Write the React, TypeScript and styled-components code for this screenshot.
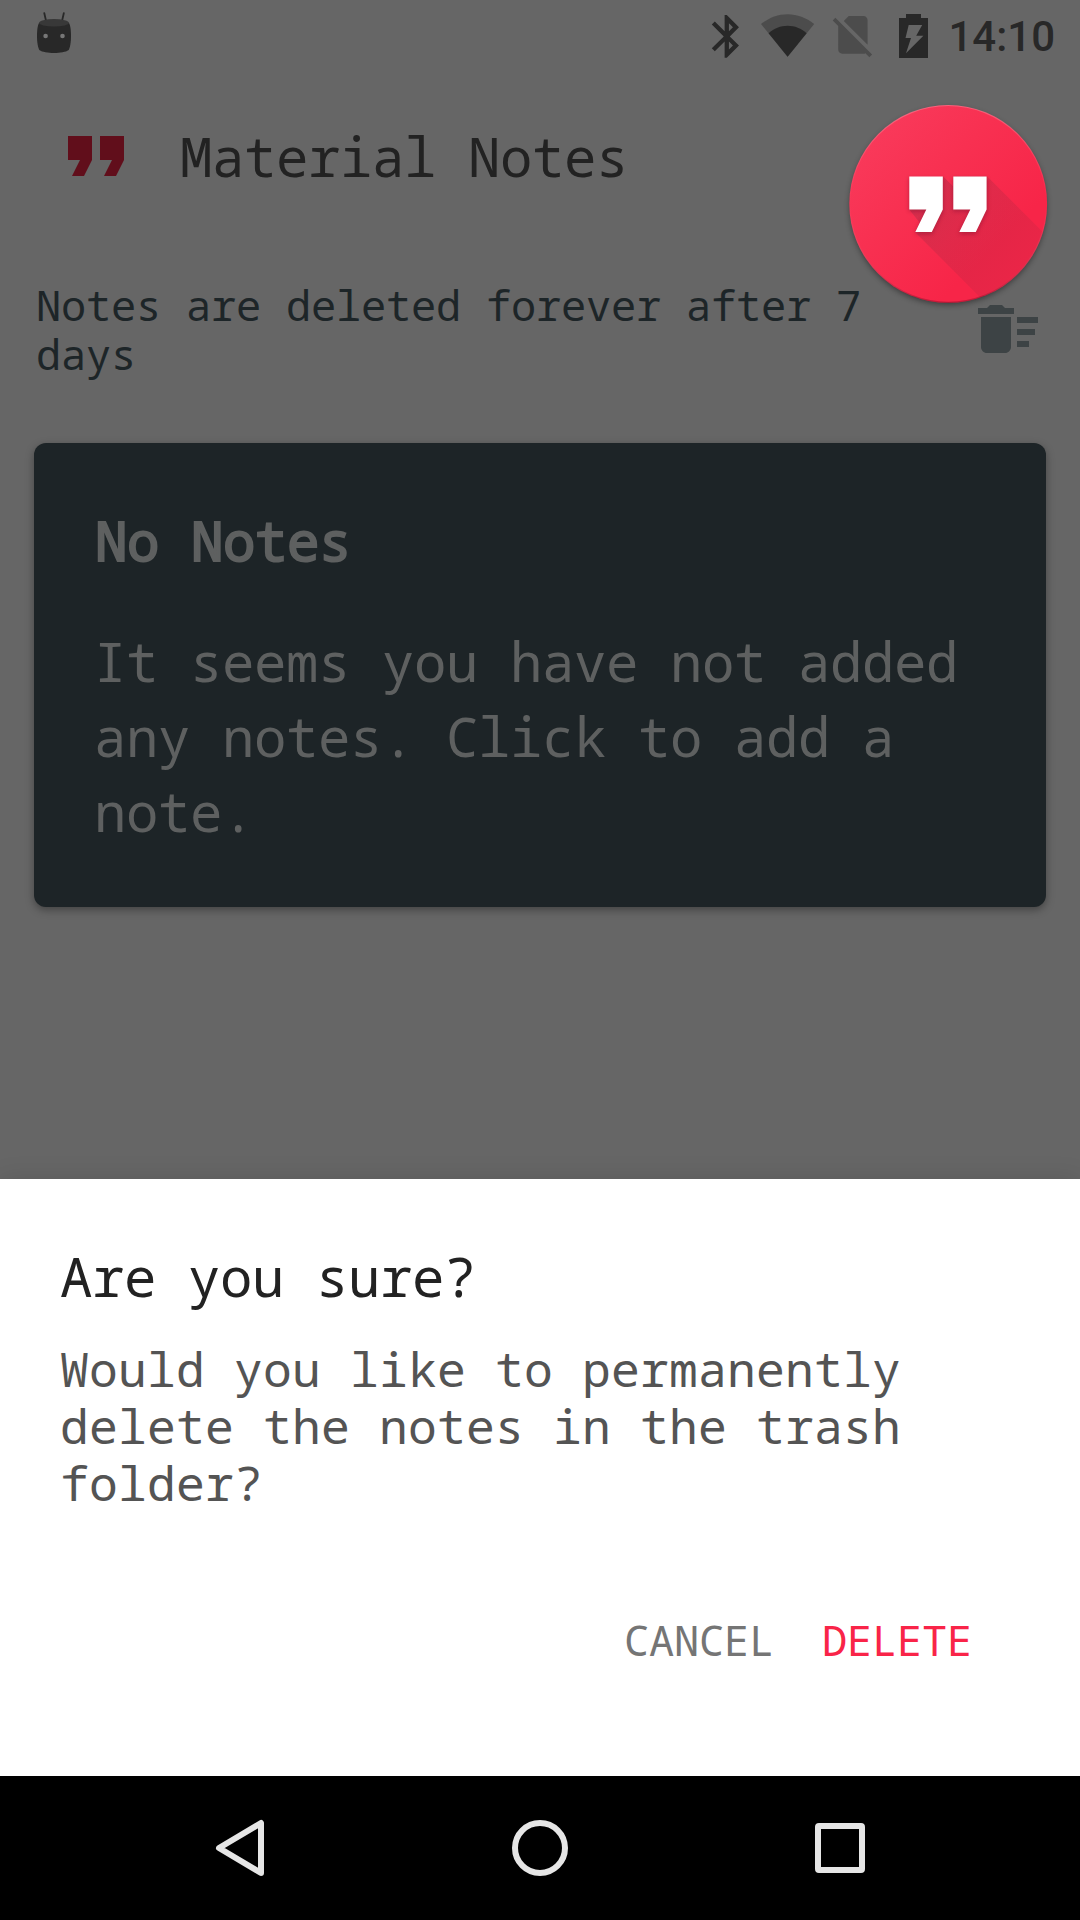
import React from "react";
import styled, { createGlobalStyle } from "styled-components";

const GlobalStyle = createGlobalStyle`
  html, body { margin: 0; padding: 0; background: #666666; }
  *, *::before, *::after { box-sizing: border-box; }
`;

const mono = `"Noto Sans Mono", "DejaVu Sans Mono", monospace`;

const Screen = styled.div`
  position: relative;
  display: flex;
  flex-direction: column;
  width: 1080px;
  height: 1920px;
  overflow: hidden;
  background: #666666;
  font-family: ${mono};
`;

const StatusBar = styled.header`
  display: flex;
  align-items: center;
  justify-content: space-between;
  height: 72px;
  padding: 0 25px 0 36px;
`;

const StatusIcons = styled.div`
  display: flex;
  align-items: center;
  height: 72px;
`;

const Clock = styled.time`
  margin-left: 18px;
  font: 500 42px/72px Roboto, sans-serif;
  color: #282828;
  padding-top: 2px;
`;

const Toolbar = styled.div`
  display: flex;
  align-items: center;
  height: 168px;
  padding-left: 60px;
  gap: 48px;
`;

const ToolbarTitle = styled.h1`
  margin: 0;
  font-size: 54px;
  font-weight: 400;
  letter-spacing: -0.4px;
  line-height: 72px;
  color: #222222;
`;

const TrashNotice = styled.section`
  display: flex;
  align-items: center;
  justify-content: space-between;
  height: 178px;
  padding: 0 36px;
`;

const NoticeText = styled.p`
  margin: 0;
  width: 860px;
  font-size: 42px;
  line-height: 49px;
  letter-spacing: -0.2px;
  color: #1d2528;
`;

const IconButton = styled.button`
  display: flex;
  padding: 0;
  border: 0;
  background: none;
`;

const Card = styled.article`
  display: flex;
  flex-direction: column;
  gap: 46px;
  height: 464px;
  margin: 25px 34px 0;
  padding: 60px 60px 58px;
  border-radius: 12px;
  background: #1d2427;
  box-shadow: 0 3px 8px rgba(0, 0, 0, 0.35);
  color: #5e6060;
  font-size: 54px;
  line-height: 75px;
  letter-spacing: -0.4px;
`;

const CardTitle = styled.h2`
  margin: 0;
  padding-left: 1px;
  font-size: inherit;
  font-weight: 400;
  -webkit-text-stroke: 2px currentColor;
`;

const CardText = styled.p`
  margin: 0;
`;

const Sheet = styled.section`
  display: flex;
  flex-direction: column;
  height: 597px;
  margin-top: auto;
  padding: 61px 60px 0;
  background: #ffffff;
  box-shadow: 0 0 24px rgba(0, 0, 0, 0.12);
`;

const SheetTitle = styled.h2`
  margin: 0 0 28px;
  font-size: 54px;
  font-weight: 400;
  line-height: 72px;
  letter-spacing: -0.4px;
  color: #222222;
`;

const SheetText = styled.p`
  margin: 0;
  font-size: 48px;
  line-height: 57px;
  letter-spacing: 0.2px;
  color: #545454;
`;

const Actions = styled.div`
  display: flex;
  justify-content: flex-end;
  gap: 48px;
  margin-top: 104px;
  padding-right: 48px;
`;

const TextButton = styled.button<{ $tone: string }>`
  padding: 0;
  border: 0;
  background: none;
  font: 400 42px/50px ${mono};
  letter-spacing: -0.2px;
  color: ${(p) => p.$tone};
`;

const NavBar = styled.nav`
  display: flex;
  flex-shrink: 0;
  justify-content: center;
  height: 144px;
  background: #000000;
`;

const NavButton = styled.button`
  display: flex;
  align-items: center;
  justify-content: center;
  width: 300px;
  padding: 0;
  border: 0;
  background: none;
`;

const FloatingLogo = styled.div`
  position: absolute;
  top: 92px;
  left: 836px;
  width: 224px;
  height: 230px;
`;

const AndroidHead = () => (
  <svg width="36" height="72" viewBox="36 0 36 72">
    <path d="M44.3 13.2l1.9 8.3M63.8 13.2l-1.9 8.3" stroke="#282828" strokeWidth="1.8" strokeLinecap="round" />
    <path d="M39 23C37.7 25 37 30 37 36s.8 11.500 2.600 14.300C42 52 48 53 54 53s12-1 14.400-2.700C70.200 47.500 71 42 71 36s-.7-11-2-13z" fill="#282828" />
    <ellipse cx="54" cy="22.800" rx="15" ry="3.700" fill="#383838" />
    <circle cx="45.600" cy="36" r="2.300" fill="#777777" />
    <circle cx="62.500" cy="36" r="2.300" fill="#777777" />
  </svg>
);

const StatusGlyphs = () => (
  <svg width="228" height="72" viewBox="702 0 228 72">
    <g fill="#282828">
      <path
        transform="translate(701.1 10.700) scale(2.140)"
        d="M17.710 7.710L12 2h-1v7.590L6.410 5 5 6.410 10.590 12 5 17.590 6.410 19 11 14.410V22h1l5.710-5.710-4.300-4.290 4.300-4.290zM13 5.830l1.880 1.880L13 9.590V5.830zm1.880 10.460L13 18.170v-3.760l1.880 1.880z"
      />
    </g>
    <path d="M787.600 56.700L761 24C769 17.700 778 14.200 787.600 14.200S806.200 17.700 814.200 24z" fill="#4c4c4c" />
    <path d="M787.600 56.700L768.600 33.200C774 28.400 780.500 25.700 787.600 25.700S801.200 28.400 806.600 33.200z" fill="#282828" />
    <path
      transform="translate(827.700 9.700) scale(2.100)"
      fill="#4c4c4c"
      d="M18.990 5c0-1.100-.89-2-1.990-2h-7L7.660 5.340 19 16.680 18.990 5zM3.650 3.880L2.380 5.150 5 7.770V19c0 1.100.9 2 2 2h10.010c.35 0 .67-.1.960-.26l1.880 1.880 1.270-1.270L3.650 3.880z"
    />
    <path d="M906 14h15v4h7v40h-29V18h7z" fill="#282828" />
    <path d="M908.700 25h13.500l-6 10.700h7.200L906 53.300 911 38h-5.500z" fill="#666666" />
  </svg>
);

const QuoteMark = () => (
  <svg width="72" height="72" viewBox="60 120 72 72">
    <path d="M68 136h24v24l-8 16H72l8-16H68zM100 136h24v24l-8 16h-12l8-16h-12z" fill="#610e1b" />
  </svg>
);

const SweepIcon = () => (
  <svg width="72" height="72" viewBox="0 0 24 24" fill="#3d4345">
    <path d="M15 16h4v2h-4zm0-8h7v2h-7zm0 4h6v2h-6zM3 18c0 1.100.9 2 2 2h6c1.100 0 2-.9 2-2V8H3v10zM14 5h-3l-1-1H6L5 5H2v2h12V5z" />
  </svg>
);

const LogoArt = () => (
  <svg width="224" height="230" viewBox="836 92 224 230">
    <defs>
      <linearGradient id="disc" x1="0.050" y1="0.100" x2="0.700" y2="0.750">
        <stop offset="0" stopColor="#f93b5c" />
        <stop offset="0.500" stopColor="#f83051" />
        <stop offset="1" stopColor="#f72548" />
      </linearGradient>
      <linearGradient id="cast" x1="909" y1="176" x2="1020" y2="270" gradientUnits="userSpaceOnUse">
        <stop offset="0" stopColor="#3a2a3a" stopOpacity="0.220" />
        <stop offset="0.500" stopColor="#3a2a3a" stopOpacity="0.120" />
        <stop offset="1" stopColor="#3a2a3a" stopOpacity="0.070" />
      </linearGradient>
      <linearGradient id="rim" x1="0" y1="0" x2="0" y2="1">
        <stop offset="0" stopColor="#ffffff" stopOpacity="0.220" />
        <stop offset="0.500" stopColor="#ffffff" stopOpacity="0" />
        <stop offset="1" stopColor="#6a0018" stopOpacity="0.350" />
      </linearGradient>
      <clipPath id="round"><circle cx="948.200" cy="203.900" r="98.900" /></clipPath>
      <filter id="soft" x="-20%" y="-20%" width="140%" height="140%"><feGaussianBlur stdDeviation="3" /></filter>
      <filter id="softer" x="-30%" y="-30%" width="160%" height="160%"><feGaussianBlur stdDeviation="2" /></filter>
    </defs>
    <circle cx="948.200" cy="206.500" r="98" fill="#000000" opacity="0.450" filter="url(#soft)" />
    <circle cx="948.200" cy="203.900" r="98.900" fill="url(#disc)" />
    <g clipPath="url(#round)">
      <path d="M943 176.300l10 10v-10h34L1087 276.300V404.600L915 232l5-9-11-13.700z" fill="url(#cast)" />
    </g>
    <circle cx="948.200" cy="203.900" r="98.400" fill="none" stroke="url(#rim)" strokeWidth="1.200" />
    <path transform="translate(0 2)" d="M909 176.300h34v33L931.800 232H915l11-22.700h-17zM953 176.300h34v33L975.800 232H959l11-22.700h-17z" fill="#70102a" opacity="0.400" filter="url(#softer)" />
    <path d="M909.300 176.600H942.800v32.900L931.800 232H915.300l11-22.500h-17zM953.300 176.600H986.600v32.900L975.800 232H959.300l11-22.500h-17z" fill="#ffffff" />
  </svg>
);

export default function App() {
  return (
    <>
      <GlobalStyle />
      <Screen>
        <StatusBar>
          <AndroidHead />
          <StatusIcons>
            <StatusGlyphs />
            <Clock>14:10</Clock>
          </StatusIcons>
        </StatusBar>

        <Toolbar>
          <QuoteMark />
          <ToolbarTitle>Material Notes</ToolbarTitle>
        </Toolbar>

        <TrashNotice>
          <NoticeText>Notes are deleted forever after 7 days</NoticeText>
          <IconButton aria-label="Empty trash">
            <SweepIcon />
          </IconButton>
        </TrashNotice>

        <Card>
          <CardTitle>No Notes</CardTitle>
          <CardText>It seems you have not added any notes. Click to add a note.</CardText>
        </Card>

        <Sheet role="dialog">
          <SheetTitle>Are you sure?</SheetTitle>
          <SheetText>Would you like to permanently delete the notes in the trash folder?</SheetText>
          <Actions>
            <TextButton $tone="#757575">CANCEL</TextButton>
            <TextButton $tone="#f92448">DELETE</TextButton>
          </Actions>
        </Sheet>

        <NavBar>
          <NavButton aria-label="Back">
            <svg width="60" height="60" viewBox="0 0 60 60">
              <path d="M51 5v50L9 30z" fill="none" stroke="#e6e6e6" strokeWidth="6" strokeLinejoin="round" />
            </svg>
          </NavButton>
          <NavButton aria-label="Home">
            <svg width="60" height="60" viewBox="0 0 60 60">
              <circle cx="30" cy="30" r="25" fill="none" stroke="#e6e6e6" strokeWidth="6" />
            </svg>
          </NavButton>
          <NavButton aria-label="Recent apps">
            <svg width="60" height="60" viewBox="0 0 60 60">
              <rect x="8" y="8" width="44" height="44" rx="1" fill="none" stroke="#e6e6e6" strokeWidth="6" strokeLinejoin="round" />
            </svg>
          </NavButton>
        </NavBar>

        <FloatingLogo>
          <LogoArt />
        </FloatingLogo>
      </Screen>
    </>
  );
}
